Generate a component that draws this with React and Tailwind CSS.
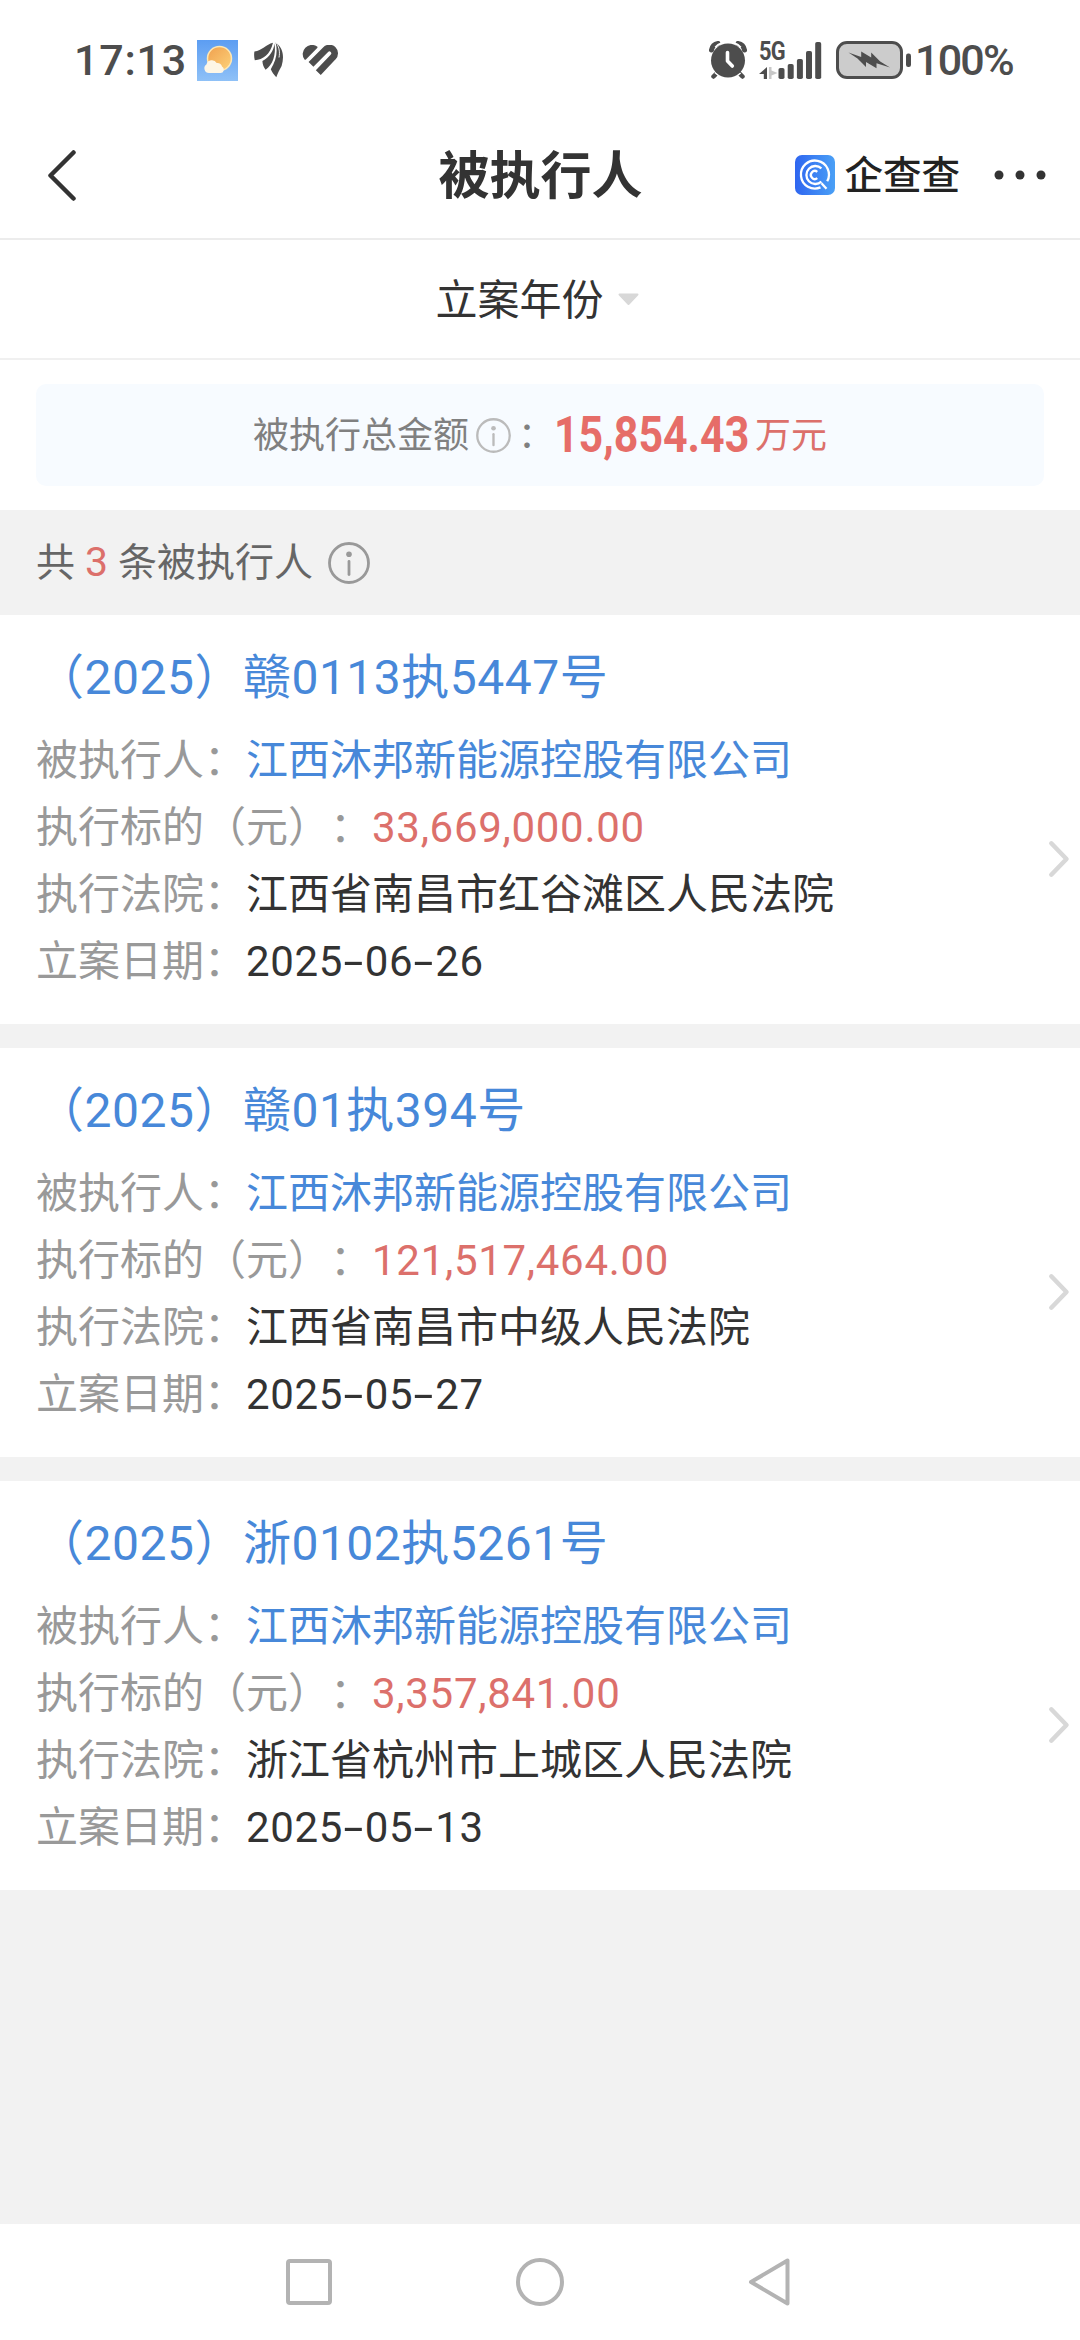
import React from 'react';

const cases = [
  {
    id: 1,
    title: '（2025）赣0113执5447号',
    company: '江西沐邦新能源控股有限公司',
    amount: '33,669,000.00',
    court: '江西省南昌市红谷滩区人民法院',
    date: '2025-06-26',
  },
  {
    id: 2,
    title: '（2025）赣01执394号',
    company: '江西沐邦新能源控股有限公司',
    amount: '121,517,464.00',
    court: '江西省南昌市中级人民法院',
    date: '2025-05-27',
  },
  {
    id: 3,
    title: '（2025）浙0102执5261号',
    company: '江西沐邦新能源控股有限公司',
    amount: '3,357,841.00',
    court: '浙江省杭州市上城区人民法院',
    date: '2025-05-13',
  },
];

function WeatherIcon() {
  return (
    <svg width="41" height="41" viewBox="0 0 41 41" className="shrink-0">
      <defs>
        <linearGradient id="sky" x1="0" y1="0" x2="0" y2="1">
          <stop offset="0" stopColor="#5c9df2" />
          <stop offset="1" stopColor="#8fc1f7" />
        </linearGradient>
        <linearGradient id="sun" x1="0" y1="0" x2="1" y2="1">
          <stop offset="0" stopColor="#f0a04e" />
          <stop offset="1" stopColor="#fcd27a" />
        </linearGradient>
      </defs>
      <rect width="41" height="41" fill="url(#sky)" />
      <circle cx="22.5" cy="18.5" r="12" fill="url(#sun)" stroke="#fde7b4" strokeWidth="1.5" />
      <path d="M12 33a4.6 4.6 0 0 1-2.6-8.4 5.6 5.6 0 0 1 10.3-1.6 4.4 4.4 0 0 1 5.3 3.6A3.4 3.4 0 0 1 23.500 33z" fill="#fdf6e6" />
    </svg>
  );
}

function WingIcon() {
  return (
    <svg width="30" height="36" viewBox="0 0 30 36" fill="#4d4d4d" className="shrink-0">
      <path d="M19 .8C12 2.600 8 8.500 .4 9.600c-.5 3-.3 6 .4 8.600C9 17.600 16 13 19 .8z" />
      <path d="M20.500 1.500c-.8 7.500-5 13.500-12.100 17.600.2 3.400 1.200 6.200 3.200 8.600C18.500 23 22.300 13 20.500 1.500z" />
      <path d="M21.600 .5c2.400 9.500 .6 18-4.800 26.800 1.400 3 3 5.600 5.500 7.900 1.800-4.500 3.200-7.300 5.300-11.200C30.300 15 29.500 6 21.600 .5z" />
      <path d="M22 .5c3.500 5 4 10 3 15" fill="none" stroke="#fff" strokeWidth=".9" />
    </svg>
  );
}

function HeartIcon() {
  return (
    <svg width="37" height="31" viewBox="0 0 37 31" className="shrink-0">
      <path d="M3.200 13.800A8.200 8.200 0 0 1 14.500 2.300z" fill="#4d4d4d" stroke="#4d4d4d" strokeWidth="2" strokeLinejoin="round" />
      <path d="M9 19.300 23.700 4.600a5.230 5.230 0 0 1 7.400 7.400L16.300 27.600" fill="none" stroke="#4d4d4d" strokeWidth="6.800" />
    </svg>
  );
}

function AlarmIcon() {
  return (
    <svg width="38" height="38" viewBox="0 0 38 38" className="shrink-0">
      <g fill="none" stroke="#4d4d4d" strokeLinecap="round">
        <path d="M2.500 9A8 8 0 0 1 9 2.500M35.500 9A8 8 0 0 0 29 2.500" strokeWidth="5" />
        <path d="M8.500 31.500l-4 4M29.500 31.500l4 4" strokeWidth="4.500" />
      </g>
      <circle cx="19" cy="19" r="18" fill="none" stroke="#fff" strokeWidth="1.800" strokeDasharray="28.270 28.270" transform="rotate(-135 19 19)" />
      <circle cx="19" cy="19.500" r="17" fill="#4d4d4d" />
      <path d="M18.500 11.500V20l4.800 5" fill="none" stroke="#fff" strokeWidth="3.600" strokeLinecap="round" strokeLinejoin="round" />
    </svg>
  );
}

function Signal() {
  return (
    <div className="relative h-[38px] w-[63px] shrink-0">
      <span className="absolute top-[-2px] left-0 origin-left scale-x-[0.84] text-[26px] leading-[24px] font-bold tracking-[-1px]">5G</span>
      <svg width="63" height="38" viewBox="0 0 63 38" className="block">
        <path d="M8 26v12H4.800v-5H0z" fill="#4d4d4d" />
        <path d="M10 26v12h2.500v-3.500l6-2.500-6-2.500V26z" fill="#c8c8c8" />
        <g fill="#4d4d4d">
          <rect x="19.500" y="27" width="6" height="11" rx="1.800" />
          <rect x="28.700" y="23" width="6" height="15" rx="1.800" />
          <rect x="37.900" y="18" width="6" height="20" rx="1.800" />
          <rect x="47" y="10" width="6" height="28" rx="1.800" />
          <rect x="56.200" y="1" width="6" height="37" rx="1.800" />
        </g>
      </svg>
    </div>
  );
}

function Battery() {
  return (
    <svg width="75" height="38" viewBox="0 0 75 38" className="shrink-0">
      <rect x="1.500" y="1.500" width="64" height="35" rx="9.500" fill="#ccc" stroke="#4d4d4d" strokeWidth="3" />
      <rect x="70" y="12.500" width="5" height="13.500" rx="2.200" fill="#4d4d4d" />
      <path d="M12.500 11.500l12.700 4.500V10.500l10 6V11.500l9 9 9.800 6-13.500-4.300v5l-10.500-6.200v5l-8.500-8.500z" fill="#4d4d4d" />
    </svg>
  );
}

function BrandLogo() {
  return (
    <svg width="40" height="40" viewBox="0 0 40 40" className="shrink-0">
      <defs>
        <linearGradient id="brand" x1="0" y1="0" x2="1" y2="0">
          <stop offset="0" stopColor="#2f66f0" />
          <stop offset="1" stopColor="#4aa0f6" />
        </linearGradient>
      </defs>
      <rect width="40" height="40" rx="7" fill="url(#brand)" />
      <g fill="none" stroke="#fff" strokeWidth="2.300">
        <path d="M25.500 32.400A14 14 0 1 1 32.200 26.300" />
        <path d="M26.500 28.300 31.500 33.800" />
        <path d="M26.400 13.300A9 9 0 1 0 26.400 26.700" />
        <path d="M22.300 16.800a4 4 0 1 0 0 6.400" />
      </g>
    </svg>
  );
}

function InfoIcon({ size, color }) {
  return (
    <svg width={size} height={size} viewBox="0 0 42 42" fill="none" stroke={color} className="shrink-0">
      <circle cx="21" cy="21" r="19.500" strokeWidth="2.800" />
      <circle cx="21" cy="12.300" r="2.800" fill={color} stroke="none" />
      <path d="M21 19.500v13" strokeWidth="2.800" strokeLinecap="round" />
    </svg>
  );
}

// hyphens are drawn wide, close to a digit's width
function DateText({ value }) {
  return value.split('-').map((part, i) => (
    <React.Fragment key={i}>
      {i > 0 && <span className="inline-block w-[22px] scale-x-[1.7] text-center">-</span>}
      {part}
    </React.Fragment>
  ));
}

function Field({ label, children }) {
  return (
    <div className="flex h-[67px] items-center text-[42px] leading-[67px] whitespace-nowrap">
      <span className="text-[#999]">{label}：</span>
      {children}
    </div>
  );
}

function CaseCard({ item }) {
  return (
    <div className="flex h-[409px] items-start justify-between bg-white pr-2.5 pl-9">
      <div className="pt-[29px]">
        <h2 className="mb-[15px] h-[68px] text-[48px] leading-[68px] tracking-[0.5px] whitespace-nowrap text-[#4788d9]">{item.title}</h2>
        <Field label="被执行人">
          <span className="text-[#4788d9]">{item.company}</span>
        </Field>
        <Field label="执行标的（元）">
          <span className="tracking-[0.7px] text-[#dc706b]">{item.amount}</span>
        </Field>
        <Field label="执行法院">
          <span className="text-[#333]">{item.court}</span>
        </Field>
        <Field label="立案日期">
          <span className="tracking-[0.6px] text-[#333]"><DateText value={item.date} /></span>
        </Field>
      </div>
      <svg width="22" height="38" viewBox="0 0 22 38" fill="none" stroke="#d8d8d8" strokeWidth="4.500" strokeLinecap="round" strokeLinejoin="round" className="mt-[225px] shrink-0">
        <path d="M3.300 3.300 18.500 19 3.300 34.700" />
      </svg>
    </div>
  );
}

export default function App() {
  return (
    <div className="flex h-[2340px] w-[1080px] flex-col overflow-hidden bg-[#f2f2f2] font-['Roboto','Noto_Sans_CJK_SC',sans-serif] [text-spacing-trim:space-all]">
      {/* Status bar */}
      <div className="flex h-[120px] shrink-0 items-center justify-between bg-white pr-[64px] pl-[74px] text-[43px] leading-none font-medium text-[#4d4d4d]">
        <div className="flex items-center">
          <span className="w-[123px] tracking-[0.8px]">17:13</span>
          <WeatherIcon />
          <span className="w-4" />
          <WingIcon />
          <span className="w-[18px]" />
          <HeartIcon />
        </div>
        <div className="flex items-center">
          <AlarmIcon />
          <span className="w-3" />
          <Signal />
          <span className="w-[14px]" />
          <Battery />
          <span className="ml-1 w-[101px] tracking-[-1.8px] whitespace-nowrap">100%</span>
        </div>
      </div>

      {/* Title bar */}
      <header className="grid h-[120px] shrink-0 grid-cols-[1fr_auto_1fr] items-center border-b-2 border-[#ececec] bg-white pr-[34px] pb-2 pl-[47px]">
        <svg width="30" height="52" viewBox="0 0 30 52" fill="none" stroke="#333" strokeWidth="4.500" strokeLinecap="round" strokeLinejoin="round">
          <path d="M26.500 3.500 3.500 26.500l23 23" />
        </svg>
        <h1 className="ml-[-12px] pt-0.5 text-[51px] leading-none font-bold text-[#333]">被执行人</h1>
        <div className="flex items-center justify-end">
          <BrandLogo />
          <span className="ml-[9px] pt-0.5 text-[38.5px] leading-none font-medium text-[#222]">企查查</span>
          <svg width="52" height="10" viewBox="0 0 52 10" fill="#333" className="ml-[34px] shrink-0">
            <circle cx="5" cy="5" r="4.500" />
            <circle cx="26" cy="5" r="4.500" />
            <circle cx="47" cy="5" r="4.500" />
          </svg>
        </div>
      </header>

      {/* Year filter */}
      <div className="flex h-[120px] shrink-0 items-center justify-center gap-[14px] border-b-2 border-[#f0f0f0] bg-white pr-[6px] text-[42px] leading-none text-[#333]">
        <span className="pt-[3px]">立案年份</span>
        <svg width="21" height="13" viewBox="0 0 21 13" fill="#d8d8d8" stroke="#d8d8d8" strokeWidth="2" strokeLinejoin="round">
          <path d="M1.500 1.500h18l-9 9.500z" />
        </svg>
      </div>

      {/* Total amount */}
      <div className="h-[150px] shrink-0 bg-white px-9 pt-6">
        <div className="flex h-[102px] items-center justify-center rounded-[10px] bg-[#f7fbff] text-[36px] leading-none text-[#808080]">
          <span className="pt-0.5">被执行总金额</span>
          <span className="ml-[7px]"><InfoIcon size={35} color="#bbb" /></span>
          <span className="ml-[7px] w-[36px] pt-0.5">：</span>
          <span className="w-[201px] origin-left scale-x-[0.858] text-[50px] font-bold whitespace-nowrap text-[#e66d68]">15,854.43</span>
          <span className="pt-0.5 text-[#dc706b]">万元</span>
        </div>
      </div>

      <div className="flex h-[105px] shrink-0 items-center pl-9 text-[39px] leading-none text-[#666]">
        <span className="pt-0.5">共</span>
        <span className="mx-2.5 text-[41px] text-[#dc706b]">3</span>
        <span className="pt-0.5">条被执行人</span>
        <span className="ml-[15px]"><InfoIcon size={42} color="#999" /></span>
      </div>

      {/* Case list */}
      <div className="flex flex-col gap-6">
        {cases.map(item => (
          <CaseCard key={item.id} item={item} />
        ))}
      </div>

      {/* System navigation */}
      <nav className="mt-auto flex h-[116px] shrink-0 items-center justify-center gap-[184px] bg-white pr-[3px]">
        <svg width="46" height="46" viewBox="0 0 46 46" fill="none" stroke="#b3b3b3" strokeWidth="4">
          <rect x="2" y="2" width="42" height="42" rx="2" />
        </svg>
        <svg width="48" height="48" viewBox="0 0 48 48" fill="none" stroke="#b3b3b3" strokeWidth="4">
          <circle cx="24" cy="24" r="22" />
        </svg>
        <svg width="43" height="48" viewBox="0 0 43 48" fill="none" stroke="#b3b3b3" strokeWidth="4" strokeLinejoin="round">
          <path d="M39.500 2.500v43L3 24z" />
        </svg>
      </nav>
    </div>
  );
}
